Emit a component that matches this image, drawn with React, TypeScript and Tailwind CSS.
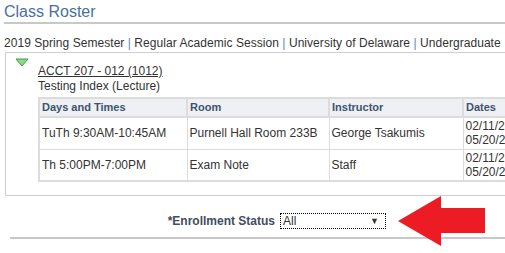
import React from "react";

const font = { fontFamily: '"Liberation Sans", Arial, sans-serif' };

const rows = [
  { days: "TuTh 9:30AM-10:45AM", room: "Purnell Hall Room 233B", instructor: "George Tsakumis", dates: ["02/11/2019 -", "05/20/2019"] },
  { days: "Th 5:00PM-7:00PM", room: "Exam Note", instructor: "Staff", dates: ["02/11/2019 -", "05/20/2019"] },
];

function Arrow() {
  return (
    <svg width="90" height="52" viewBox="0 0 90 52" className="shrink-0">
      <polygon points="0,26 43,1 43,13 87,13 87,38 43,38 43,51" fill="#ed1c24" />
    </svg>
  );
}

export default function App() {
  return (
    <div className="w-[505px] h-[253px] overflow-hidden bg-white text-[#333] relative" style={font}>
      <div className="pl-[4px] pt-[3px]">
        <h1 className="text-[16px] leading-[18px] text-[#4a6ea5]">Class Roster</h1>
        <div className="mt-[1px] h-[2px] bg-[#c8c8c8]" />
      </div>

      <div className="pl-[4px] pt-[12px] text-[12px] leading-[14px] whitespace-nowrap tracking-[0.05px]">
        2019 Spring Semester <span className="text-[#5b87b8]">|</span> Regular Academic Session{" "}
        <span className="text-[#5b87b8]">|</span> University of Delaware{" "}
        <span className="text-[#5b87b8]">|</span> Undergraduate
      </div>

      <div className="ml-[5px] mt-[2px] w-[600px] border-t border-l border-b border-[#cfcfcf] h-[144px]">
        <div className="flex">
          <svg width="14" height="9" viewBox="0 0 14 9" className="ml-[9px] mt-[5px] shrink-0">
            <polygon points="1,1 13,1 7,8" fill="#8fd88f" stroke="#3f9f3f" strokeWidth="1" />
          </svg>
          <div className="ml-[9px] pt-[11px]">
            <div className="text-[12px] leading-[14px] underline">ACCT 207 - 012 (1012)</div>
            <div className="text-[12px] leading-[14px] mt-[1px]">Testing Index (Lecture)</div>
          </div>
        </div>
        <table className="ml-[32px] mt-[4px] border-collapse text-[12px] border-2 border-[#dcdcdc]">
          <thead>
            <tr className="bg-[#eef0f3] h-[19px]">
              <th className="w-[148px] text-left font-bold text-[11px] text-[#3e5470] px-[2px] border-r-2 border-b-2 border-[#dcdcdc]">Days and Times</th>
              <th className="w-[142px] text-left font-bold text-[11px] text-[#3e5470] px-[2px] border-r-2 border-b-2 border-[#dcdcdc]">Room</th>
              <th className="w-[134px] text-left font-bold text-[11px] text-[#3e5470] px-[2px] border-r-2 border-b-2 border-[#dcdcdc]">Instructor</th>
              <th className="w-[110px] text-left font-bold text-[11px] text-[#3e5470] px-[2px] border-b-2 border-[#dcdcdc]">Dates</th>
            </tr>
          </thead>
          <tbody>
            {rows.map((r, i) => (
              <tr key={i} className="h-[32px]">
                <td className="px-[2px] border-r border-b border-[#dcdcdc] whitespace-nowrap">{r.days}</td>
                <td className="px-[2px] border-r border-b border-[#dcdcdc] whitespace-nowrap">{r.room}</td>
                <td className="px-[2px] border-r border-b border-[#dcdcdc] whitespace-nowrap">{r.instructor}</td>
                <td className="px-[2px] border-b border-[#dcdcdc] leading-[14px] whitespace-nowrap">
                  {r.dates[0]}
                  <br />
                  {r.dates[1]}
                </td>
              </tr>
            ))}
          </tbody>
        </table>
      </div>

      <div className="ml-[10px] h-[43px] border-b-2 border-[#c8c8c8] flex items-center pt-[9px]">
        <div className="w-[265px] text-right text-[12px] font-bold text-[#3f4d5e]">*Enrollment Status</div>
        <div className="ml-[5px] w-[106px] h-[16px] border border-dotted border-black flex items-center justify-between px-[2px] text-[12px] leading-[14px]">
          <span>All</span>
          <span className="text-[9px] pr-[4px]">▼</span>
        </div>
      </div>

      <div className="absolute left-[398px] top-[195px]">
        <Arrow />
      </div>
    </div>
  );
}
